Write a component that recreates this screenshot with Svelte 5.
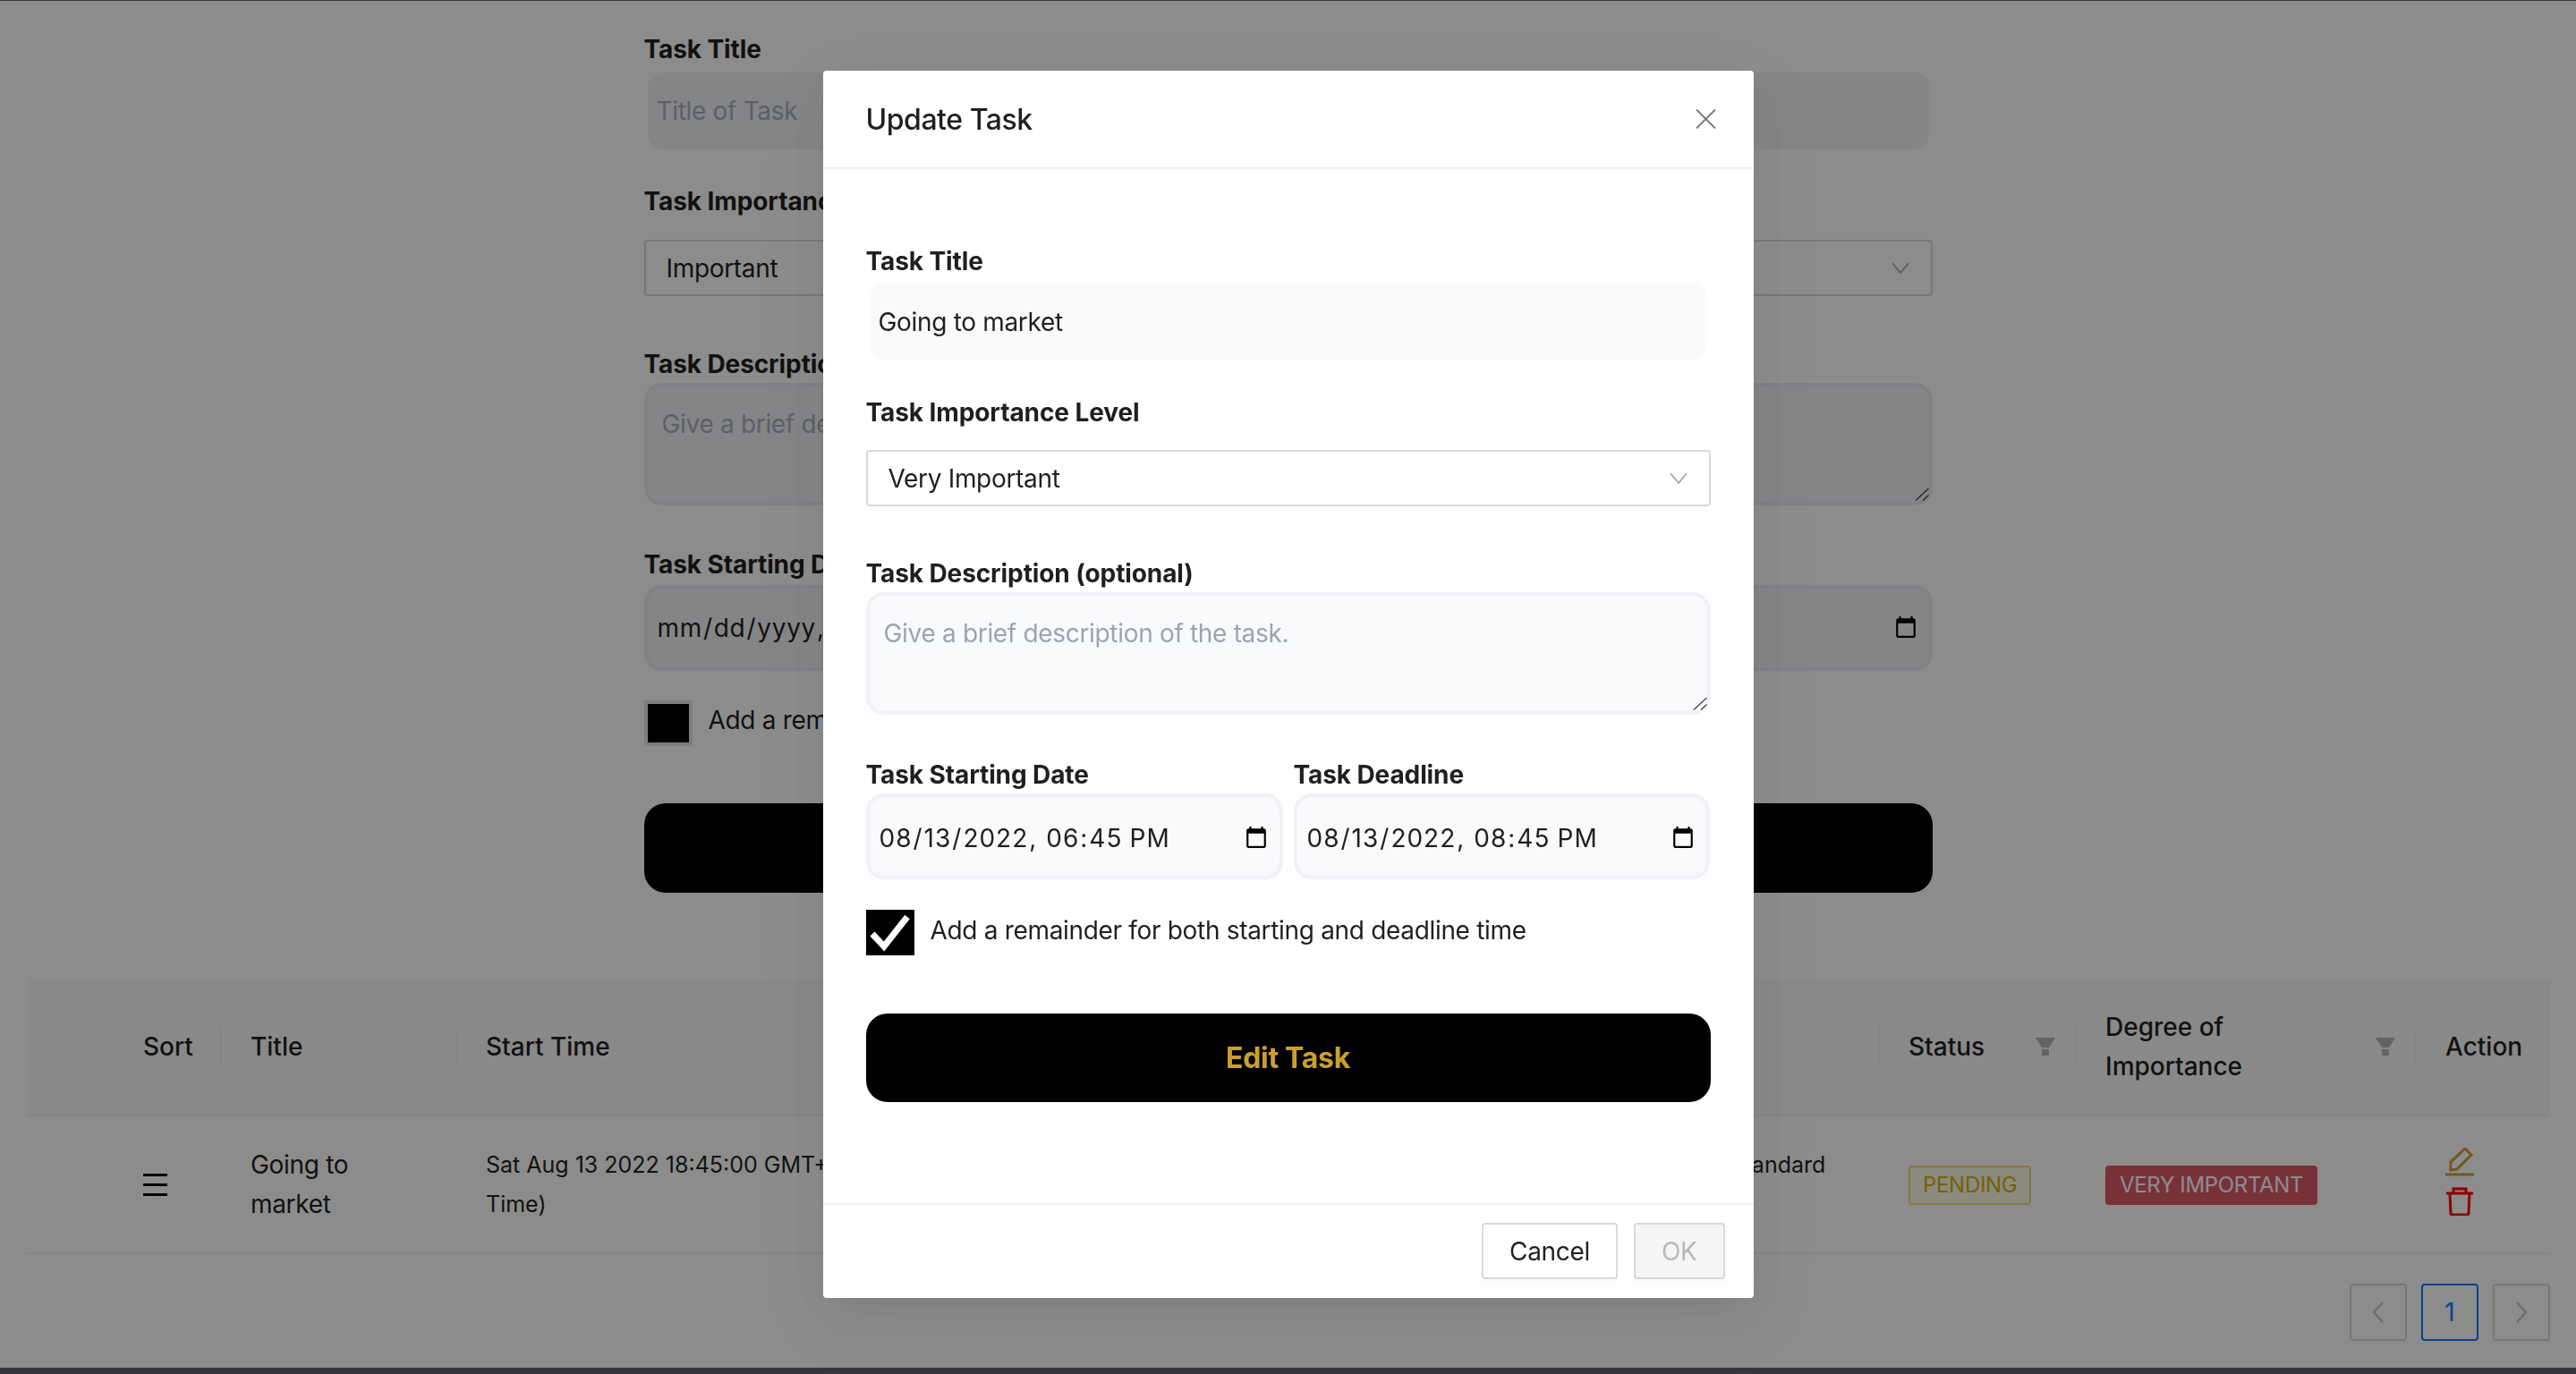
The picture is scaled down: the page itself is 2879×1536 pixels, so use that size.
<script>
	const startText = 'Sat Aug 13 2022 18:45:00 GMT+0530 (India Standard Time)';
	const endText = 'Sat Aug 13 2022 20:45:00 GMT+0530 (India Standard Time)';
	const remainder = 'Add a remainder for both starting and deadline time';
</script>

<div class="page">
	<form class="task-form">
		<div class="field f-title">
			<label for="bg-title">Task Title</label>
			<input id="bg-title" class="text-input" placeholder="Title of Task" />
		</div>
		<div class="field f-level">
			<span class="label">Task Importance Level</span>
			<div class="select">
				<span>Important</span>
				<svg class="chevron" viewBox="0 0 22 14"><path d="M1 1l10 12L21 1" /></svg>
			</div>
		</div>
		<div class="field f-desc">
			<label for="bg-desc">Task Description (optional)</label>
			<div class="area">
				<textarea id="bg-desc" placeholder="Give a brief description of the task."></textarea>
				<svg class="grip" viewBox="0 0 16 15"><path d="M1 14.5L15.5 1M9 14.5L15.5 8.5" /></svg>
			</div>
		</div>
		<div class="field f-date">
			<label for="bg-start">Task Starting Date</label>
			<input id="bg-start" class="date-input" type="datetime-local" />
		</div>
		<div class="remind">
			<span class="box bg-box"></span>
			<span>{remainder}</span>
		</div>
		<button type="button" class="submit">Add Task</button>
	</form>

	<section class="table-wrap">
		<table>
			<colgroup>
				<col style="width: 98px" />
				<col style="width: 120px" />
				<col style="width: 263px" />
				<col style="width: 860px" />
				<col style="width: 730px" />
				<col style="width: 220px" />
				<col style="width: 380px" />
				<col style="width: 149px" />
			</colgroup>
			<thead>
				<tr>
					<th></th>
					<th class="sep">Sort</th>
					<th class="sep">Title</th>
					<th class="sep">Start Time</th>
					<th class="sep">End Time</th>
					<th class="sep">
						<div class="th-filter">
							Status
							<svg class="filter" viewBox="0 0 22 20"><path d="M0 0h22l-7 11h-8zM7 13h8v7H7z" /></svg>
						</div>
					</th>
					<th class="sep">
						<div class="th-filter">
							<span>Degree of<br />Importance</span>
							<svg class="filter" viewBox="0 0 22 20"><path d="M0 0h22l-7 11h-8zM7 13h8v7H7z" /></svg>
						</div>
					</th>
					<th>Action</th>
				</tr>
			</thead>
			<tbody>
				<tr>
					<td></td>
					<td>
						<div class="drag"><i></i><i></i><i></i></div>
					</td>
					<td>Going to market</td>
					<td class="time start">{startText}</td>
					<td class="time">{endText}</td>
					<td><span class="tag pending">PENDING</span></td>
					<td><span class="tag very">VERY IMPORTANT</span></td>
					<td>
						<div class="actions">
							<svg class="edit" viewBox="0 0 32 32">
								<path d="M22 1l7 7L13 24l-7 1V16z" />
								<path d="M0 30h32" />
							</svg>
							<svg class="trash" viewBox="0 0 32 32">
								<path d="M1 7h30M9 7V2h14v5M5 7l1 22q0 2 2 2h16q2 0 2-2l1-22" />
							</svg>
						</div>
					</td>
				</tr>
			</tbody>
		</table>
	</section>

	<nav class="pager">
		<button type="button" aria-label="Previous">
			<svg viewBox="0 0 14 24"><path d="M12 1L2 12l10 11" /></svg>
		</button>
		<button type="button" class="current">1</button>
		<button type="button" aria-label="Next">
			<svg viewBox="0 0 14 24"><path d="M2 1l10 11L2 23" /></svg>
		</button>
	</nav>

	<div class="bottom-bar"></div>
</div>

<div class="overlay">
	<div class="modal" role="dialog" aria-modal="true">
		<header>
			<h2>Update Task</h2>
			<svg class="close" viewBox="0 0 24 24"><path d="M1 1l22 22M23 1L1 23" /></svg>
		</header>
		<div class="modal-body">
			<div class="field m-title">
				<label for="m-title">Task Title</label>
				<input id="m-title" class="text-input" value="Going to market" />
			</div>
			<div class="field m-level">
				<span class="label">Task Importance Level</span>
				<div class="select">
					<span>Very Important</span>
					<svg class="chevron" viewBox="0 0 22 14"><path d="M1 1l10 12L21 1" /></svg>
				</div>
			</div>
			<div class="field m-desc">
				<label for="m-desc">Task Description (optional)</label>
				<div class="area">
					<textarea id="m-desc" placeholder="Give a brief description of the task."></textarea>
					<svg class="grip" viewBox="0 0 16 15"><path d="M1 14.5L15.5 1M9 14.5L15.5 8.5" /></svg>
				</div>
			</div>
			<div class="date-row">
				<div class="field">
					<label for="m-start">Task Starting Date</label>
					<input id="m-start" class="date-input" type="datetime-local" value="2022-08-13T18:45" />
				</div>
				<div class="field">
					<label for="m-end">Task Deadline</label>
					<input id="m-end" class="date-input" type="datetime-local" value="2022-08-13T20:45" />
				</div>
			</div>
			<div class="remind">
				<span class="box">
					<svg viewBox="0 0 54 51"><path d="M7 27l13 14L46 8" /></svg>
				</span>
				<span>{remainder}</span>
			</div>
			<button type="button" class="submit">Edit Task</button>
		</div>
		<footer>
			<button type="button" class="btn">Cancel</button>
			<button type="button" class="btn" disabled>OK</button>
		</footer>
	</div>
</div>

<style>
	:global(body) {
		margin: 0;
		background: #fff;
		font-family: Inter, 'Liberation Sans', sans-serif;
		font-size: 28px;
		letter-spacing: -0.32px;
		color: rgba(0, 0, 0, 0.85);
	}

	.page {
		height: 1536px;
		display: flex;
		flex-direction: column;
		border-top: 1px solid #6a6a6a;
		box-sizing: border-box;
		overflow: hidden;
	}

	.task-form {
		width: 1440px;
		margin: 33px auto 0;
	}

	label,
	.label {
		display: block;
		padding-top: 1px;
		font-weight: 700;
		line-height: 40px;
		letter-spacing: -0.1px;
		color: #1f1f1f;
	}

	input,
	textarea,
	.select {
		font-family: inherit;
		font-size: 28px;
		letter-spacing: -0.32px;
		box-sizing: border-box;
	}

	.text-input {
		display: block;
		width: calc(100% - 8px);
		height: 86px;
		margin: 0 4px;
		padding: 0 10px;
		border: 0;
		border-radius: 16px;
		background: #f9fafc;
		color: #1f1f1f;
	}

	.text-input::placeholder,
	textarea::placeholder {
		color: #9ca3b4;
		opacity: 1;
	}

	.select {
		display: flex;
		align-items: center;
		justify-content: space-between;
		height: 63px;
		padding: 0 24px 0 23px;
		border: 2px solid #d9d9d9;
		border-radius: 4px;
		background: #fff;
		color: #1f1f1f;
	}

	.chevron {
		width: 20px;
		height: 13px;
		fill: none;
		stroke: #ababab;
		stroke-width: 2;
	}

	.area {
		position: relative;
	}

	textarea {
		display: block;
		width: 100%;
		height: 137px;
		padding: 25px 16px 16px;
		border: 4px solid #f0f2f7;
		border-radius: 20px;
		background: #f9fafc;
		color: #1f1f1f;
		outline: none;
		resize: none;
	}

	.grip {
		position: absolute;
		right: 4px;
		bottom: 5px;
		width: 16px;
		height: 15px;
		fill: none;
		stroke: #4a4a4a;
		stroke-width: 1.4;
	}

	.date-input {
		display: block;
		width: 100%;
		height: 96px;
		padding: 3px 10px 0;
		border: 4px solid #f0f2f7;
		border-radius: 20px;
		background: #f9fafc;
		color: #1f1f1f;
		letter-spacing: 1px;
	}

	.remind {
		display: flex;
		align-items: flex-start;
		gap: 18px;
		line-height: 46px;
		color: #1f1f1f;
	}

	.box {
		flex: none;
		width: 54px;
		height: 51px;
		background: #000;
		box-sizing: border-box;
	}

	.box svg {
		display: block;
		width: 100%;
		height: 100%;
		fill: none;
		stroke: #fff;
		stroke-width: 7;
	}

	.bg-box {
		border: 4px solid #e0e3ea;
	}

	.submit {
		display: block;
		width: 100%;
		height: 100px;
		border: 0;
		border-radius: 24px;
		background: #000;
		color: #c9a02f;
		font-family: inherit;
		font-size: 32px;
		font-weight: 700;
		letter-spacing: -0.3px;
	}

	/* background form */
	.task-form .text-input,
	.task-form textarea,
	.task-form .date-input {
		background: #f2f3f6;
	}
	.task-form textarea,
	.task-form .date-input {
		border-color: #e9ebf0;
	}
	.task-form .text-input::placeholder,
	.task-form textarea::placeholder {
		color: #a6aebf;
	}
	.f-title label {
		margin-bottom: 6px;
	}
	.f-level {
		margin-top: 37px;
	}
	.f-level .label {
		margin-bottom: 23px;
	}
	.f-desc {
		margin-top: 55px;
	}
	.f-desc label {
		margin-bottom: 1px;
	}
	.f-date {
		margin-top: 45px;
	}
	.f-date label {
		margin-bottom: 3px;
	}
	.f-date .date-input {
		padding-top: 0;
		letter-spacing: 0.7px;
	}
	.task-form .remind {
		margin-top: 33px;
		line-height: 44px;
	}
	.task-form .submit {
		margin-top: 64px;
	}

	/* table */
	.table-wrap {
		margin: 96px 29px 0 30px;
	}

	table {
		width: 2820px;
		table-layout: fixed;
		border-collapse: collapse;
		line-height: 44px;
	}

	th {
		position: relative;
		height: 153px;
		padding: 0 32px;
		background: #fafafa;
		border-bottom: 2px solid #f0f0f0;
		font-weight: 500;
		letter-spacing: 0;
		text-align: left;
		color: #1f1f1f;
		box-sizing: border-box;
	}

	th.sep::after {
		content: '';
		position: absolute;
		right: 0;
		top: 50%;
		width: 2px;
		height: 44px;
		transform: translateY(-50%);
		background: #f0f0f0;
	}

	td {
		height: 154px;
		padding: 0 32px;
		border-bottom: 2px solid #f0f0f0;
		color: #1f1f1f;
		box-sizing: border-box;
	}

	td.time {
		font-size: 25px;
		letter-spacing: 0;
	}

	td.start {
		padding-right: 180px;
	}

	.th-filter {
		display: flex;
		align-items: center;
		justify-content: space-between;
		margin-right: -8px;
	}

	.filter {
		flex: none;
		width: 22px;
		height: 20px;
		fill: #b4b4b4;
	}

	.drag {
		display: flex;
		flex-direction: column;
		gap: 8px;
		width: 27px;
	}

	.drag i {
		display: block;
		height: 3px;
		background: #000;
	}

	.tag {
		display: inline-block;
		padding: 0 14px;
		line-height: 40px;
		font-size: 24px;
		border-radius: 4px;
		white-space: nowrap;
		border: 2px solid transparent;
	}

	.pending {
		background: #fefce8;
		border-color: #e9df6f;
		color: #d4b106;
	}

	.very {
		background: #dc5a68;
		color: #fff;
	}

	.actions {
		display: flex;
		flex-direction: column;
		gap: 12px;
		width: 32px;
		padding-bottom: 6px;
	}

	.actions svg {
		display: block;
		width: 32px;
		height: 32px;
		fill: none;
		stroke-width: 3;
	}

	.edit {
		stroke: #cba135;
	}

	.trash {
		stroke: #ff0000;
	}

	.pager {
		display: flex;
		justify-content: flex-end;
		gap: 16px;
		margin: 33px 29px 0 0;
	}

	.pager button {
		width: 64px;
		height: 64px;
		padding: 0;
		border: 2px solid #d9d9d9;
		border-radius: 4px;
		background: #fff;
		display: flex;
		align-items: center;
		justify-content: center;
		font-family: inherit;
		font-size: 28px;
	}

	.pager svg {
		width: 14px;
		height: 24px;
		fill: none;
		stroke: #bfbfbf;
		stroke-width: 2;
	}

	.pager .current {
		border-color: #1677ff;
		color: #1677ff;
	}

	.bottom-bar {
		margin-top: auto;
		height: 7px;
		background: #62646f;
	}

	/* modal */
	.overlay {
		position: fixed;
		inset: 0;
		background: rgba(0, 0, 0, 0.45);
	}

	.modal {
		width: 1040px;
		margin: 79px auto 0;
		background: #fff;
		border-radius: 4px;
		box-shadow:
			0 12px 32px -16px rgba(0, 0, 0, 0.08),
			0 18px 56px 0 rgba(0, 0, 0, 0.05),
			0 24px 96px 32px rgba(0, 0, 0, 0.03);
	}

	header {
		display: flex;
		align-items: center;
		justify-content: space-between;
		height: 108px;
		padding: 0 42px 0 48px;
		border-bottom: 2px solid #f0f0f0;
	}

	h2 {
		margin: 0;
		font-size: 32px;
		font-weight: 500;
		letter-spacing: -0.45px;
		color: #1f1f1f;
	}

	.close {
		width: 23px;
		height: 24px;
		fill: none;
		stroke: #7a7a7a;
		stroke-width: 2;
	}

	.modal-body {
		height: 1156px;
		padding: 82px 48px 0;
		box-sizing: border-box;
	}

	.m-title label {
		margin-bottom: 5px;
	}
	.m-level {
		margin-top: 37px;
	}
	.m-level .label {
		margin-bottom: 22px;
	}
	.m-desc {
		margin-top: 54px;
	}
	.m-desc label {
		margin-bottom: 1px;
	}

	.date-row {
		display: grid;
		grid-template-columns: 466px 465px;
		gap: 12px;
		margin-top: 46px;
	}
	.date-row label {
		margin-bottom: 1px;
	}

	.modal-body .remind {
		margin-top: 34px;
	}
	.modal-body .submit {
		margin-top: 65px;
		height: 99px;
	}

	footer {
		display: flex;
		justify-content: flex-end;
		gap: 18px;
		padding: 20px 32px 21px;
		border-top: 2px solid #f0f0f0;
	}

	.btn {
		height: 63px;
		padding: 0 29px;
		border: 2px solid #d9d9d9;
		border-radius: 4px;
		background: #fff;
		font-family: inherit;
		font-size: 28px;
		letter-spacing: -0.32px;
		color: #1f1f1f;
		box-shadow: 0 4px 0 rgba(0, 0, 0, 0.015);
	}

	.btn:disabled {
		background: #f5f5f5;
		color: #b8b8b8;
	}
</style>
